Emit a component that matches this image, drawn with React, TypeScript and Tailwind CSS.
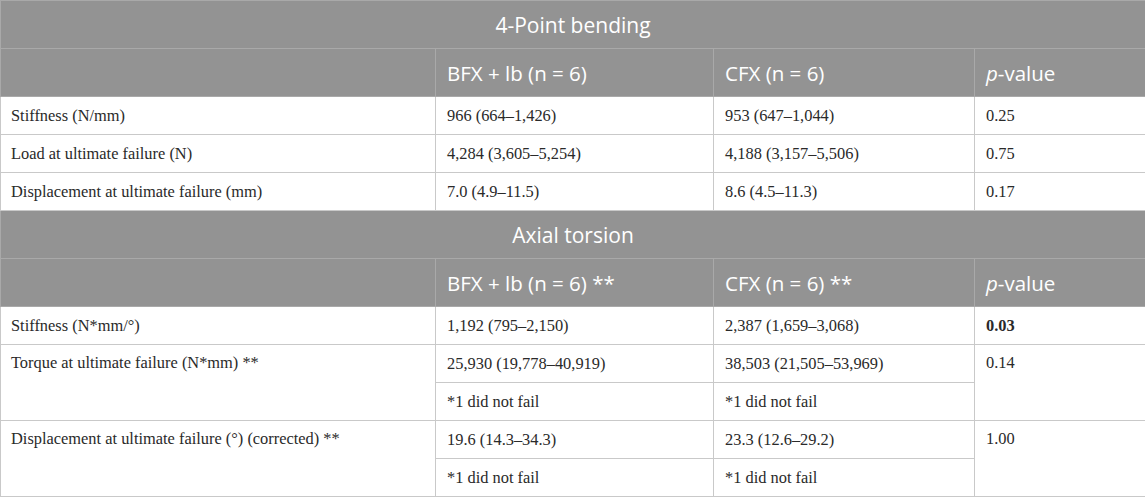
const serif = "font-['Liberation_Serif',serif]";

interface Row {
  label: string;
  bfx: string;
  cfx: string;
  p: string;
  bold?: boolean;
  note?: boolean;
}

const bending: Row[] = [
  { label: 'Stiffness (N/mm)', bfx: '966 (664–1,426)', cfx: '953 (647–1,044)', p: '0.25' },
  { label: 'Load at ultimate failure (N)', bfx: '4,284 (3,605–5,254)', cfx: '4,188 (3,157–5,506)', p: '0.75' },
  { label: 'Displacement at ultimate failure (mm)', bfx: '7.0 (4.9–11.5)', cfx: '8.6 (4.5–11.3)', p: '0.17' },
];

const torsion: Row[] = [
  { label: 'Stiffness (N*mm/°)', bfx: '1,192 (795–2,150)', cfx: '2,387 (1,659–3,068)', p: '0.03', bold: true },
  { label: 'Torque at ultimate failure (N*mm) **', bfx: '25,930 (19,778–40,919)', cfx: '38,503 (21,505–53,969)', p: '0.14', note: true },
  { label: 'Displacement at ultimate failure (°) (corrected) **', bfx: '19.6 (14.3–34.3)', cfx: '23.3 (12.6–29.2)', p: '1.00', note: true },
];

function SectionHead({ title, stars }: { title: string; stars?: boolean }) {
  return (
    <>
      <tr className="h-[48px] bg-[#939393]">
        <td colSpan={4} className="border border-[#a9a9a9] text-center text-[21px] text-white font-['Open_Sans',sans-serif]">
          {title}
        </td>
      </tr>
      <tr className="h-[48px] bg-[#939393] text-[20.5px] text-white font-['Open_Sans',sans-serif]">
        <td className="border border-[#a9a9a9]" />
        <td className="border border-[#a9a9a9] px-[11px]">BFX + lb (n = 6){stars ? ' **' : ''}</td>
        <td className="border border-[#a9a9a9] px-[11px]">CFX (n = 6){stars ? ' **' : ''}</td>
        <td className="border border-[#a9a9a9] px-[11px]">
          <span className="italic">p</span>-value
        </td>
      </tr>
    </>
  );
}

function DataRows({ rows }: { rows: Row[] }) {
  return (
    <>
      {rows.map((r) =>
        r.note ? (
          <>
            <tr key={r.label} className="h-[38px]">
              <td rowSpan={2} className="border border-[#c9c9c9] pl-[10px] pr-3 pt-[8px] align-top">{r.label}</td>
              <td className="border border-[#c9c9c9] px-[11px]">{r.bfx}</td>
              <td className="border border-[#c9c9c9] px-[11px]">{r.cfx}</td>
              <td rowSpan={2} className="border border-[#c9c9c9] px-[11px] pt-[8px] align-top">{r.p}</td>
            </tr>
            <tr key={r.label + '-n'} className="h-[38px]">
              <td className="border border-[#c9c9c9] px-[11px]">*1 did not fail</td>
              <td className="border border-[#c9c9c9] px-[11px]">*1 did not fail</td>
            </tr>
          </>
        ) : (
          <tr key={r.label} className="h-[38px]">
            <td className="border border-[#c9c9c9] pl-[10px] pr-3">{r.label}</td>
            <td className="border border-[#c9c9c9] px-[11px]">{r.bfx}</td>
            <td className="border border-[#c9c9c9] px-[11px]">{r.cfx}</td>
            <td className={`border border-[#c9c9c9] px-[11px] ${r.bold ? 'font-bold' : ''}`}>{r.p}</td>
          </tr>
        )
      )}
    </>
  );
}

export default function App() {
  return (
    <div className="w-[1145px] h-[498px] bg-white overflow-hidden">
      <table className={`w-[1145px] table-fixed border-collapse text-[16.4px] leading-[20px] text-[#2a2a2a] ${serif}`}>
        <colgroup>
          <col className="w-[435px]" />
          <col className="w-[278px]" />
          <col className="w-[261px]" />
          <col className="w-[171px]" />
        </colgroup>
        <tbody>
          <SectionHead title="4-Point bending" />
          <DataRows rows={bending} />
          <SectionHead title="Axial torsion" stars />
          <DataRows rows={torsion} />
        </tbody>
      </table>
    </div>
  );
}
